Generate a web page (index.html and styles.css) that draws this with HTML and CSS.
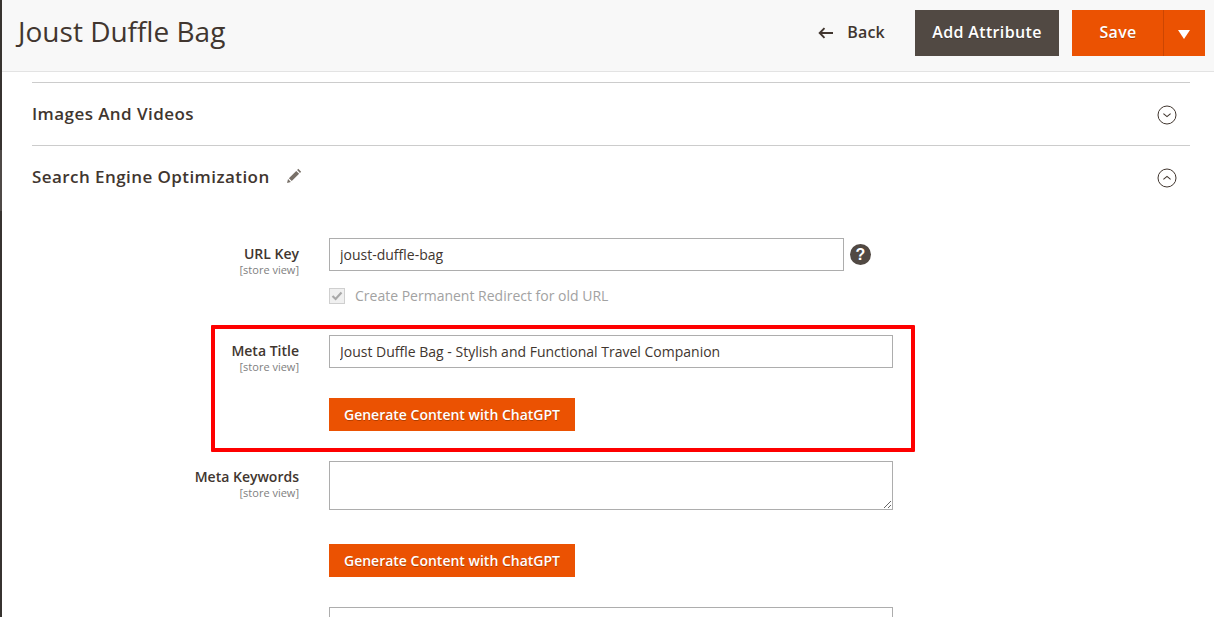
FILE: index.html
```html
<!DOCTYPE html>
<html lang="en">
<head>
<meta charset="utf-8">
<title>Joust Duffle Bag</title>
<link rel="stylesheet" href="styles.css">
</head>
<body>
<div class="page">
  <div class="rail"></div>
  <div class="main">
    <header class="topbar">
      <h1 class="page-title">Joust Duffle Bag</h1>
      <div class="actions">
        <a class="back">
          <svg class="back-icon" width="15" height="12" viewBox="0 0 15 12"><path d="M15 6H2M6.5 1.2 1.7 6l4.8 4.8" fill="none" stroke="#41362f" stroke-width="1.9"/></svg>
          <span>Back</span>
        </a>
        <button class="btn btn-dark">Add Attribute</button>
        <div class="split">
          <button class="btn btn-save">Save</button>
          <button class="btn btn-toggle"><span class="caret"></span></button>
        </div>
      </div>
    </header>
    <div class="content">
      <section class="section section-first">
        <div class="section-head">
          <span class="section-title">Images And Videos</span>
          <svg class="chevron" width="20" height="20" viewBox="0 0 20 20"><circle cx="10" cy="10" r="9" fill="none" stroke="#41362f" stroke-width="1"/><path d="M6.4 8.6 10 11.6l3.6-3" fill="none" stroke="#41362f" stroke-width="1.1"/></svg>
        </div>
      </section>
      <section class="section">
        <div class="section-head">
          <span class="section-title">Search Engine Optimization</span>
          <svg class="pencil" width="16" height="16" viewBox="0 0 15 15"><path d="M1 14l.9-3.6 2.7 2.7zM2.7 9.6 9.6 2.7l2.7 2.7-6.9 6.9zM10.4 1.9l1.1-1.1 2.7 2.7-1.1 1.1z" fill="#787068"/></svg>
          <svg class="chevron" width="20" height="20" viewBox="0 0 20 20"><circle cx="10" cy="10" r="9" fill="none" stroke="#41362f" stroke-width="1"/><path d="M6.4 11.4 10 8.4l3.6 3" fill="none" stroke="#41362f" stroke-width="1.1"/></svg>
        </div>
        <div class="form">
          <div class="field field-url">
            <div class="label"><span class="label-text">URL Key</span><span class="scope">[store view]</span></div>
            <div class="control">
              <div class="input-line">
                <input class="input input-short" type="text" value="joust-duffle-bag">
                <span class="help">?</span>
              </div>
              <label class="redirect">
                <span class="check"><svg width="12" height="10" viewBox="0 0 12 10"><path d="M1.5 5 4.6 8 10.5 1.6" fill="none" stroke="#a9a9a9" stroke-width="2.2"/></svg></span>
                <span>Create Permanent Redirect for old URL</span>
              </label>
            </div>
          </div>
          <div class="field field-title">
            <div class="highlight"></div>
            <div class="label"><span class="label-text">Meta Title</span><span class="scope">[store view]</span></div>
            <div class="control">
              <input class="input input-wide" type="text" value="Joust Duffle Bag - Stylish and Functional Travel Companion">
              <button class="btn btn-generate">Generate Content with ChatGPT</button>
            </div>
          </div>
          <div class="field field-keywords">
            <div class="label"><span class="label-text">Meta Keywords</span><span class="scope">[store view]</span></div>
            <div class="control">
              <textarea class="input input-wide textarea"></textarea>
              <button class="btn btn-generate">Generate Content with ChatGPT</button>
            </div>
          </div>
          <div class="field field-description">
            <div class="label"></div>
            <div class="control"><textarea class="input input-wide textarea"></textarea></div>
          </div>
        </div>
      </section>
    </div>
  </div>
</div>
</body>
</html>
```
FILE: styles.css
```css
* { box-sizing: border-box; }
html, body { margin: 0; height: 100%; overflow: hidden; }
body { background: #fff; color: #41362f; font-family: "Open Sans", sans-serif; font-size: 14px; }
.page { display: flex; height: 617px; overflow: hidden; }
.rail { flex: 0 0 2px; background: linear-gradient(#373330 0, #373330 150px, #4f4a47 150px, #4f4a47 211px, #373330 211px); }
.main { flex: 1; min-width: 0; }
.topbar { height: 72px; background: #f8f8f8; border-bottom: 1px solid #e3e3e3; display: flex; align-items: flex-start; justify-content: space-between; padding: 9px 9px 0 16px; }
.page-title { margin: 0; font-size: 28px; font-weight: 400; line-height: 44px; color: #41362f; }
.actions { display: flex; align-items: stretch; height: 46px; margin-top: 1px; }
.back { display: flex; align-items: center; gap: 14px; margin-right: 30px; padding-bottom: 2px; font-size: 16px; font-weight: 600; color: #41362f; letter-spacing: .2px; }
.back-icon { display: block; margin-left: -1px; margin-top: 1px; }
.btn { border: 0; border-radius: 0; font-family: inherit; font-weight: 600; color: #fff; padding: 0; text-shadow: 0 1px 0 rgba(0,0,0,.25); }
.btn-dark { width: 144px; margin-right: 13px; background: #514943; font-size: 16px; letter-spacing: .35px; padding-bottom: 2px; }
.split { display: flex; }
.btn-save { width: 92px; background: #eb5202; font-size: 16px; letter-spacing: .35px; padding: 0 0 2px 1px; border-right: 1px solid #cc4602; }
.btn-toggle { width: 41px; background: #eb5202; display: flex; align-items: center; justify-content: center; padding-right: 1px; }
.caret { width: 0; height: 0; border-left: 6px solid transparent; border-right: 6px solid transparent; border-top: 9px solid #fff; margin-top: 2px; }
.content { padding: 10px 24px 0 30px; }
.section { border-top: 1px solid #cccccc; }
.section-head { display: flex; align-items: center; height: 62px; }
.section-title { font-size: 17px; font-weight: 600; letter-spacing: .43px; color: #41362f; margin-top: -2px; }
.chevron { margin-left: auto; margin-right: 13px; margin-top: 2px; }
.pencil { margin-left: 16px; margin-top: -2px; }
.form { padding-top: 30px; }
.field { display: flex; position: relative; }
.label { text-align: right; display: flex; flex-direction: column; align-items: flex-end; flex: 0 0 267px; padding-top: 6px; }
.label-text { font-size: 14px; font-weight: 600; line-height: 19px; color: #41362f; }
.scope { font-size: 11px; line-height: 14px; color: #808080; }
.control { margin-left: 30px; display: flex; flex-direction: column; align-items: flex-start; }
.input { display: block; border: 1px solid #adadad; border-radius: 0; background: #fff; font-family: inherit; font-size: 14px; color: #41362f; padding: 0 10px; height: 33px; outline: 0; }
.input-short { width: 515px; }
.input-wide { width: 564px; }
.input-line { display: flex; align-items: center; gap: 6px; }
.help { width: 21px; height: 21px; border-radius: 50%; background: #514943; color: #fff; font-size: 16px; font-weight: 700; line-height: 21px; text-align: center; font-family: "Liberation Sans", sans-serif; }
.redirect { display: flex; align-items: center; gap: 10px; margin-top: 15px; color: #a2a2a2; font-size: 14px; line-height: 19px; }
.check { width: 16px; height: 16px; border: 1px solid #cfcfcf; background: #f0f0f0; display: flex; align-items: center; justify-content: center; margin-top: 1px; }
.field-url { height: 97px; }
.field-title { height: 126px; }
.field-keywords { height: 146px; }
.highlight { position: absolute; left: 179px; top: -10px; width: 704px; height: 127px; border: 4px solid #fe0000; border-radius: 1px; }
.btn-generate { width: 246px; height: 33px; background: #eb5202; font-size: 14px; margin-top: 30px; position: relative; }
.textarea { height: 49px; padding: 8px 10px; resize: vertical; }
.field-keywords .btn-generate { margin-top: 34px; }
.field-description .textarea { height: 60px; }
```
